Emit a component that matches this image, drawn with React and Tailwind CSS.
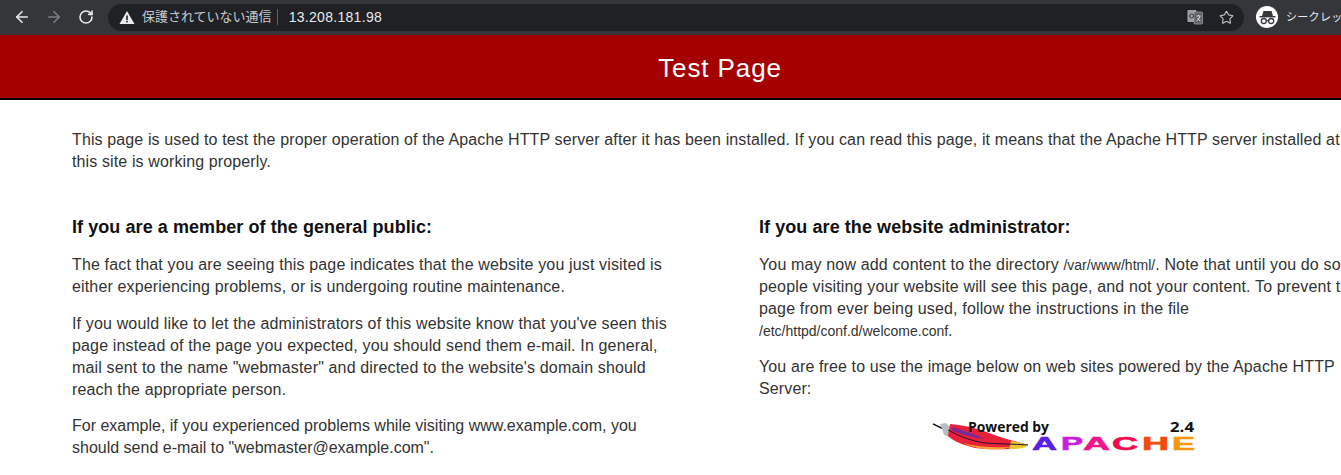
import { ArrowLeft, ArrowRight, RotateCw, Star } from 'lucide-react'

const sans = 'font-["Liberation_Sans",Arial,"Noto_Sans_CJK_JP",sans-serif]'
const body = 'text-[16px] leading-[22px] tracking-[0.15px] text-[#333]'
const bodyTight = 'text-[16px] leading-[22px] tracking-[0.12px] text-[#333]'
const heading = 'text-[18px] leading-[24px] font-bold tracking-[0.07px] text-[#111]'
const code = "font-['Liberation_Sans',sans-serif] text-[14px] leading-none tracking-normal"

function WarnIcon() {
  return (
    <svg width="16" height="15" viewBox="0 0 16 15" className="shrink-0">
      <path d="M8 1 L15.5 14 H0.5 Z" fill="#e8eaed" />
      <rect x="7.2" y="5.5" width="1.6" height="4.5" fill="#202124" />
      <rect x="7.2" y="10.8" width="1.6" height="1.6" fill="#202124" />
    </svg>
  )
}

function TranslateIcon() {
  return (
    <svg width="16" height="16" viewBox="0 0 16 16" className="shrink-0">
      <rect x="0.5" y="1" width="9" height="12" rx="1" fill="#9aa0a6" />
      <rect x="7" y="3" width="8.5" height="12" rx="1" fill="#5f6368" stroke="#9aa0a6" strokeWidth="0.8" />
      <circle cx="4.6" cy="7" r="2" fill="none" stroke="#35363a" strokeWidth="1" />
      <path d="M9.5 7 H13.5 M11.5 6 V7 M13 7 Q12 11 9.5 12 M10.5 9 Q11.5 11.5 13.5 12" fill="none" stroke="#e8eaed" strokeWidth="0.8" />
    </svg>
  )
}

function IncognitoIcon() {
  return (
    <div className="w-[22px] h-[22px] rounded-full bg-white flex items-center justify-center shrink-0">
      <svg width="17" height="15" viewBox="0 0 17 15">
        <path d="M4.5 1 H12.5 L14 6 H3 Z" fill="#35363a" />
        <rect x="0.5" y="6" width="16" height="1.4" fill="#35363a" />
        <circle cx="4.8" cy="11" r="2.5" fill="none" stroke="#35363a" strokeWidth="1.3" />
        <circle cx="12.2" cy="11" r="2.5" fill="none" stroke="#35363a" strokeWidth="1.3" />
        <path d="M7.2 10.6 H9.8" stroke="#35363a" strokeWidth="1.2" />
      </svg>
    </div>
  )
}

function ApacheLogo() {
  const letters = [
    { c: 'A', x: 99, w: 25, fill: '#5a1ee6' },
    { c: 'P', x: 128, w: 22, fill: '#c81ee0' },
    { c: 'A', x: 150, w: 27, fill: '#f0148c' },
    { c: 'C', x: 179, w: 26, fill: '#f00a50' },
    { c: 'H', x: 209, w: 27, fill: '#f54a0a' },
    { c: 'E', x: 239, w: 23, fill: '#fa960a' },
  ]
  return (
    <svg width="262" height="40" viewBox="0 0 262 40" className="block">
      {/* feather */}
      <path d="M0 8 C6 11 10 13 16 15" stroke="#111" strokeWidth="1.4" fill="none" />
      <path d="M7 8 L13 7 L17 11 L16 21 L11 19 L9 13 Z" fill="#b8bcc4" />
      <path d="M17 8 C30 9 44 12 56 17 C68 22 82 25 95 29 C82 34 60 34 42 32 C30 29 20 25 15 20 Z" fill="#e8203a" />
      <path d="M18 11 C30 14 42 18 52 23 C42 22 30 19 20 15 Z" fill="#7a2a98" />
      <path d="M30 27 C44 31 60 32 78 31 L70 33 C56 34 42 33 30 27 Z" fill="#f5a030" />
      <path d="M78 25 C86 26 92 28 95 29 C91 33 84 33 76 33 Z" fill="#e8c830" />
      <path d="M15 14 C26 20 38 25 52 27 C66 28 82 28 95 29" stroke="#2a1030" strokeWidth="1" fill="none" />
      <text x="35" y="16" fontFamily="'Open Sans', sans-serif" fontWeight="700" fontSize="14" textLength="81" lengthAdjust="spacingAndGlyphs" fill="#111">Powered by</text>
      <text x="237" y="16" fontFamily="'Open Sans', sans-serif" fontWeight="700" fontSize="15" textLength="24" lengthAdjust="spacingAndGlyphs" fill="#111">2.4</text>
      {letters.map((l, i) => (
        <text key={i} x={l.x} y="34" fontFamily="'Liberation Sans', sans-serif" fontWeight="700" fontSize="18" textLength={l.w} lengthAdjust="spacingAndGlyphs" fill={l.fill} stroke={l.fill} strokeWidth="0.6">{l.c}</text>
      ))}
    </svg>
  )
}

export default function App() {
  return (
    <div className={`w-[1341px] h-[475px] overflow-hidden bg-white ${sans}`}>
      {/* browser toolbar */}
      <div className="h-[35px] pb-[1px] bg-[#35363a] flex items-center pl-[13px] pr-0 w-[1341px] overflow-hidden">
        <ArrowLeft size={18} strokeWidth={2.2} color="#e8eaed" className="shrink-0" />
        <ArrowRight size={18} strokeWidth={2.2} color="#7c7f84" className="shrink-0 ml-[14px]" />
        <RotateCw size={16} strokeWidth={2.4} color="#e8eaed" className="shrink-0 ml-[15px]" />
        <div className="ml-[14px] w-[1136px] h-[27px] rounded-full bg-[#202124] flex items-center pl-[11px] pr-[10px] shrink-0">
          <WarnIcon />
          <span className="ml-[7px] text-[13px] text-[#c8cbd0] whitespace-nowrap">保護されていない通信</span>
          <span className="ml-[5px] w-px h-[16px] bg-[#5f6368]" />
          <span className="ml-[11px] text-[14px] text-[#e8eaed] tracking-[0.3px]">13.208.181.98</span>
          <div className="ml-auto flex items-center gap-[16px]">
            <TranslateIcon />
            <Star size={15} color="#bdc1c6" strokeWidth={1.8} className="shrink-0" />
          </div>
        </div>
        <div className="ml-[12px] flex items-center shrink-0">
          <IncognitoIcon />
          <span className="ml-[8px] text-[11px] tracking-[0.3px] text-[#e8eaed] whitespace-nowrap">シークレット</span>
        </div>
      </div>

      {/* page, wider than the window */}
      <div className="w-[1438px]">
        <div className="h-[65px] pt-[3px] pl-[2px] bg-[#a50000] border-b-2 border-black flex items-center justify-center">
          <h1 className="text-[26px] text-white font-normal tracking-[0.9px]">Test Page</h1>
        </div>

        <div className="px-[72px] pt-[29px]">
          <p className={bodyTight}>
            This page is used to test the proper operation of the Apache HTTP server after it has been installed. If you can read this page, it means that the Apache HTTP server installed at this site is working properly.
          </p>

          <div className="mt-[42px] grid grid-cols-2 gap-[80px]">
            <div>
              <h2 className={heading}>If you are a member of the general public:</h2>
              <p className={`mt-[15px] ${body}`}>The fact that you are seeing this page indicates that the website you just visited is either experiencing problems, or is undergoing routine maintenance.</p>
              <p className={`mt-[15px] ${body}`}>If you would like to let the administrators of this website know that you've seen this page instead of the page you expected, you should send them e-mail. In general, mail sent to the name "webmaster" and directed to the website's domain should reach the appropriate person.</p>
              <p className="mt-[14px] text-[16px] leading-[22px] text-[#333]">For example, if you experienced problems while visiting www.example.com, you should send e-mail to "webmaster@example.com".</p>
            </div>
            <div>
              <h2 className={heading}>If you are the website administrator:</h2>
              <p className={`mt-[15px] ${body}`}>
                You may now add content to the directory <code className={code}>/var/www/html/</code>. Note that until you do so, people visiting your website will see this page, and not your content. To prevent this page from ever being used, follow the instructions in the file <code className={code}>/etc/httpd/conf.d/welcome.conf</code>.
              </p>
              <p className={`mt-[14px] ${bodyTight}`}>You are free to use the image below on web sites powered by the Apache HTTP Server:</p>
              <div className="mt-[16px] flex justify-center pl-[3px]">
                <ApacheLogo />
              </div>
            </div>
          </div>
        </div>
      </div>
    </div>
  )
}
